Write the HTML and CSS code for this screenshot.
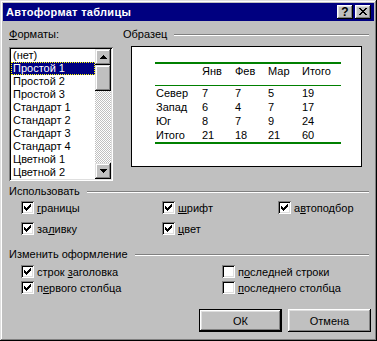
FILE: index.html
```html
<!DOCTYPE html>
<html lang="ru">
<head>
  <meta charset="UTF-8" />
  <title>Автоформат таблицы</title>
  <link rel="stylesheet" href="styles.css">
</head>
<body>

  <div class="window">
    <div class="titlebar">
      <span class="title">Автоформат таблицы</span>
      <div class="title-buttons">
        <button class="tbtn help">?</button>
        <button class="tbtn close">
          <svg width="8" height="7" viewBox="0 0 8 7" shape-rendering="crispEdges"><path d="M0 0h2v1h-2z M6 0h2v1h-2z M1 1h2v1h-2z M5 1h2v1h-2z M2 2h4v1h-4z M3 3h2v1h-2z M2 4h4v1h-4z M1 5h2v1h-2z M5 5h2v1h-2z M0 6h2v1h-2z M6 6h2v1h-2z" fill="#000"/></svg>
        </button>
      </div>
    </div>

    <div class="content">
      <div class="top">
        <div class="formats">
          <div class="label"><u>Ф</u>орматы:</div>
          <div class="listbox">
            <ul class="items">
              <li>(нет)</li>
              <li class="selected">Простой 1</li>
              <li>Простой 2</li>
              <li>Простой 3</li>
              <li>Стандарт 1</li>
              <li>Стандарт 2</li>
              <li>Стандарт 3</li>
              <li>Стандарт 4</li>
              <li>Цветной 1</li>
              <li>Цветной 2</li>
            </ul>
            <div class="scrollbar">
              <div class="sbtn">
                <svg width="7" height="4" viewBox="0 0 7 4" shape-rendering="crispEdges"><path d="M3 0h1v1h-1z M2 1h3v1h-3z M1 2h5v1h-5z M0 3h7v1h-7z" fill="#000"/></svg>
              </div>
              <div class="thumb"></div>
              <div class="track"></div>
              <div class="sbtn">
                <svg width="7" height="4" viewBox="0 0 7 4" shape-rendering="crispEdges"><path d="M0 0h7v1h-7z M1 1h5v1h-5z M2 2h3v1h-3z M3 3h1v1h-1z" fill="#000"/></svg>
              </div>
            </div>
          </div>
        </div>

        <div class="sample">
          <div class="group-head">
            <span>Образец</span>
            <div class="etched"></div>
          </div>
          <div class="preview">
            <div class="ptable">
              <div class="prow head">
                <span></span><span>Янв</span><span>Фев</span><span>Мар</span><span>Итого</span>
              </div>
              <div class="prow"><span>Север</span><span>7</span><span>7</span><span>5</span><span>19</span></div>
              <div class="prow"><span>Запад</span><span>6</span><span>4</span><span>7</span><span>17</span></div>
              <div class="prow"><span>Юг</span><span>8</span><span>7</span><span>9</span><span>24</span></div>
              <div class="prow"><span>Итого</span><span>21</span><span>18</span><span>21</span><span>60</span></div>
            </div>
          </div>
        </div>
      </div>

      <div class="group-head use-head">
        <span>Использовать</span>
        <div class="etched"></div>
      </div>
      <div class="checks use">
        <label class="check"><span class="box on"></span><span><u>г</u>раницы</span></label>
        <label class="check"><span class="box on"></span><span><u>ш</u>рифт</span></label>
        <label class="check"><span class="box on"></span><span>а<u>в</u>топодбор</span></label>
        <label class="check"><span class="box on"></span><span>за<u>л</u>ивку</span></label>
        <label class="check"><span class="box on"></span><span><u>ц</u>вет</span></label>
      </div>

      <div class="group-head change-head">
        <span>Изменить оформление</span>
        <div class="etched"></div>
      </div>
      <div class="checks change">
        <label class="check"><span class="box on"></span><span>строк <u>з</u>аголовка</span></label>
        <label class="check"><span class="box"></span><span>п<u>о</u>следней строки</span></label>
        <label class="check"><span class="box on"></span><span>п<u>е</u>рвого столбца</span></label>
        <label class="check"><span class="box"></span><span><u>п</u>оследнего столбца</span></label>
      </div>

      <div class="actions">
        <button class="btn default">ОК</button>
        <button class="btn">Отмена</button>
      </div>
    </div>
  </div>

</body>
</html>
```

FILE: styles.css
```css
body {
  margin: 0;
  background: #c0c0c0;
  font-family: "Liberation Sans", Arial, sans-serif;
  font-size: 11px;
  color: #000;
}
.window {
  width: 377px;
  height: 341px;
  box-sizing: border-box;
  padding: 3px;
  background: #c0c0c0;
  box-shadow: inset -1px -1px #000, inset 1px 1px #dfdfdf, inset -2px -2px #808080, inset 2px 2px #fff;
}
.titlebar {
  height: 18px;
  background: #000080;
  display: flex;
  align-items: center;
  justify-content: space-between;
  padding: 0 3px 0 3px;
}
.title {
  color: #fff;
  font-weight: bold;
  font-size: 11px;
  letter-spacing: 0.3px;
}
.title-buttons {
  display: flex;
  gap: 2px;
}
.tbtn {
  width: 16px;
  height: 14px;
  padding: 0;
  border: none;
  background: #c0c0c0;
  box-shadow: inset -1px -1px #000, inset 1px 1px #fff, inset -2px -2px #808080, inset 2px 2px #dfdfdf;
  display: flex;
  align-items: center;
  justify-content: center;
  font-family: "Liberation Sans", Arial, sans-serif;
  font-weight: bold;
  font-size: 12px;
  line-height: 14px;
}
.tbtn.close svg {
  margin-top: -1px;
}
.content {
  padding: 7px 5px 0 6px;
}
.top {
  display: flex;
  gap: 10px;
}
.formats {
  width: 104px;
}
.label {
  line-height: 13px;
  margin-bottom: 6px;
}
.listbox {
  height: 134px;
  box-sizing: border-box;
  background: #fff;
  box-shadow: inset 1px 1px #808080, inset -1px -1px #fff, inset 2px 2px #000, inset -2px -2px #dfdfdf;
  padding: 2px;
  display: flex;
}
.items {
  list-style: none;
  margin: 0;
  padding: 0;
  flex: 1;
  overflow: hidden;
}
.items li {
  height: 13px;
  line-height: 13px;
  padding-left: 2px;
  white-space: nowrap;
}
.items li.selected {
  background: #000080;
  color: #fff;
  outline: 1px dotted #ff0;
  outline-offset: -1px;
}
.scrollbar {
  width: 16px;
  display: flex;
  flex-direction: column;
}
.sbtn, .thumb {
  height: 16px;
  background: #c0c0c0;
  box-shadow: inset -1px -1px #000, inset 1px 1px #dfdfdf, inset -2px -2px #808080, inset 2px 2px #fff;
  display: flex;
  align-items: center;
  justify-content: center;
}
.thumb {
  height: 26px;
}
.track {
  flex: 1;
  background: repeating-conic-gradient(#fff 0 25%, #c0c0c0 0 50%) 0 0 / 2px 2px;
}
.sample {
  flex: 1;
}
.group-head {
  display: flex;
  align-items: center;
  line-height: 13px;
}
.etched {
  flex: 1;
  height: 0;
  border-top: 1px solid #808080;
  border-bottom: 1px solid #fff;
  margin-left: 7px;
}
.preview {
  margin: 5px 0 0 8px;
  width: 231px;
  height: 121px;
  box-sizing: border-box;
  border: 1px solid #000;
  background: #fff;
  padding: 15px 0 0 23px;
}
.ptable {
  width: 186px;
  border-top: 2px solid #008000;
  border-bottom: 2px solid #008000;
}
.prow {
  display: grid;
  grid-template-columns: 46px 33px 33px 34px 1fr;
  padding-left: 1px;
  line-height: 14px;
}
.prow.head {
  padding-bottom: 7px;
  border-bottom: 1px solid #008000;
}
.use-head {
  margin-top: 4px;
}
.checks {
  display: grid;
  padding-left: 12px;
}
.checks.use {
  grid-template-columns: 141px 116px 1fr;
  row-gap: 8px;
  margin-top: 3px;
}
.change-head {
  margin-top: 13px;
}
.checks.change {
  grid-template-columns: 201px 1fr;
  row-gap: 3px;
  margin-top: 4px;
}
.check {
  display: flex;
  align-items: center;
  gap: 3px;
  height: 13px;
  white-space: nowrap;
}
.box {
  width: 13px;
  height: 13px;
  flex: none;
  box-sizing: border-box;
  background: #fff;
  box-shadow: inset 1px 1px #808080, inset -1px -1px #fff, inset 2px 2px #000, inset -2px -2px #dfdfdf;
}
.box.on {
  background: #fff url("data:image/svg+xml,%3Csvg xmlns='http://www.w3.org/2000/svg' width='7' height='7' shape-rendering='crispEdges'%3E%3Cpath d='M6 0h1v1h-1z M5 1h2v1h-2z M0 2h1v1h-1z M4 2h3v1h-3z M0 3h2v1h-2z M3 3h3v1h-3z M0 4h5v1h-5z M1 5h3v1h-3z M2 6h1v1h-1z' fill='%23000'/%3E%3C/svg%3E") 3px 3px no-repeat;
}
.actions {
  display: flex;
  justify-content: flex-end;
  gap: 6px;
  margin-top: 15px;
  margin-right: -2px;
}
.btn {
  width: 83px;
  height: 23px;
  padding: 0;
  border: none;
  background: #c0c0c0;
  font-family: "Liberation Sans", Arial, sans-serif;
  font-size: 11px;
  color: #000;
  box-shadow: inset -1px -1px #000, inset 1px 1px #fff, inset -2px -2px #808080, inset 2px 2px #dfdfdf;
}
.btn.default {
  box-shadow: inset 0 0 0 1px #000, inset -2px -2px #000, inset 2px 2px #fff, inset -3px -3px #808080, inset 3px 3px #dfdfdf;
}
```
